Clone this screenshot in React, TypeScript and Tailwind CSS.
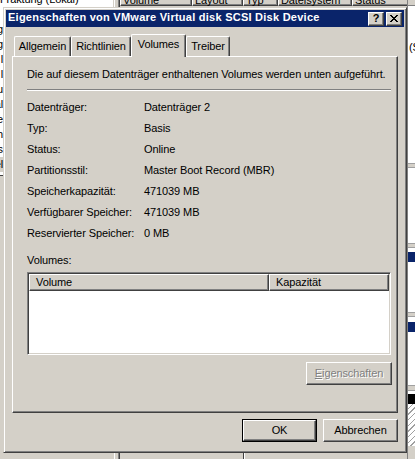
import React from "react";

const font = "font-['Liberation_Sans',Arial,sans-serif]";
const raised =
  "border border-t-white border-l-white border-r-[#404040] border-b-[#404040] shadow-[inset_-1px_-1px_0_#808080]";
const sunken =
  "border border-t-[#808080] border-l-[#808080] border-r-white border-b-white shadow-[inset_1px_1px_0_#404040,inset_-1px_-1px_0_#d4d0c8]";

const rows: [string, string][] = [
  ["Datenträger:", "Datenträger 2"],
  ["Typ:", "Basis"],
  ["Status:", "Online"],
  ["Partitionsstil:", "Master Boot Record (MBR)"],
  ["Speicherkapazität:", "471039 MB"],
  ["Verfügbarer Speicher:", "471039 MB"],
  ["Reservierter Speicher:", "0 MB"],
];

const tabs = [
  { label: "Allgemein", w: "w-[57px]" },
  { label: "Richtlinien", w: "w-[60px]" },
  { label: "Volumes", w: "w-[55px]", active: true },
  { label: "Treiber", w: "w-[44px]" },
];

const closeGlyph = [
  "XX....XX",
  ".XX..XX.",
  "..XXXX..",
  "...XX...",
  "..XXXX..",
  ".XX..XX.",
  "XX....XX",
];

function CloseIcon() {
  return (
    <svg width="8" height="7" viewBox="0 0 8 7" shapeRendering="crispEdges">
      {closeGlyph.flatMap((r, y) =>
        r.split("").map((c, x) => (c === "X" ? <rect key={`${x}-${y}`} x={x} y={y} width="1" height="1" fill="#000" /> : null))
      )}
    </svg>
  );
}

function Background() {
  const tree = ["ng", "ng", "l", "l", "u", "al", "e", "h", "s"];
  return (
    <>
      {/* tree pane behind */}
      <div className="absolute left-0 top-0 w-[113px] h-[176px] bg-white overflow-hidden border-b border-[#404040]">
        <div className="absolute left-0 top-[-7px] leading-[13px] whitespace-nowrap">Fraktung (Lokal)</div>
        <div className="absolute right-[110px] top-[22px] w-[40px] text-right leading-[15px]">
          {tree.map((t, i) => (
            <div key={i}>{t}</div>
          ))}
          <div className="bg-[#d4d0c8]">el</div>
        </div>
      </div>
      {/* splitter */}
      <div className="absolute left-[114px] top-0 w-px h-full bg-white" />
      <div className="absolute left-[118px] top-0 w-px h-full bg-[#808080]" />
      <div className="absolute left-[119px] top-0 w-px h-full bg-[#404040]" />
      {/* list header behind */}
      <div className="absolute left-[120px] top-0 h-[6px] right-0 flex overflow-hidden">
        {[
          ["Volume", "w-[72px]"],
          ["Layout", "w-[51px]"],
          ["Typ", "w-[35px]"],
          ["Dateisystem", "w-[74px]"],
          ["Status", "flex-1"],
        ].map(([t, w]) => (
          <div key={t} className={`${w} relative h-[14px] -mt-[8px] ${raised}`}>
            <span className="absolute left-[2px] top-[1px] leading-[13px]">{t}</span>
          </div>
        ))}
      </div>
      {/* graphical view at the right */}
      <div className="absolute left-[407px] top-0 w-[8px] h-full flex flex-col border-l border-[#808080]">
        <div className="h-[5px] bg-[#d4d0c8]" />
        <div className="h-[158px] bg-white border-t border-[#808080] relative">
          <span className="absolute left-[1px] top-[35px] leading-[13px]">(S</span>
        </div>
        <div className="h-[5px] bg-[#d4d0c8] border-y border-[#a0a0a0]" />
        <div className="h-[75px] bg-white" />
        <div className="h-[5px] bg-[#d4d0c8] border-y border-[#a0a0a0]" />
        <div className="h-[4px] bg-white" />
        <div className="h-[10px] bg-[#0a246a]" />
        <div className="h-[50px] bg-white" />
        <div className="h-[5px] bg-[#d4d0c8] border-y border-[#a0a0a0]" />
        <div className="h-[5px] bg-white" />
        <div className="h-[10px] bg-[#0a246a]" />
        <div className="h-[53px] bg-white" />
        <div className="h-[6px] bg-[#d4d0c8] border-y border-[#a0a0a0]" />
        <div className="h-[3px] bg-white" />
        <div className="h-[10px] bg-black" />
        <div className="h-[42px] bg-[repeating-linear-gradient(135deg,#ffffff_0px,#ffffff_3px,#a0a0a0_3px,#a0a0a0_4px)]" />
        <div className="flex-1 bg-[#d4d0c8]" />
      </div>
      {/* bits below the dialog */}
      <div className="absolute left-[243px] top-[453px] w-px h-[6px] bg-[#404040]" />
      <div className="absolute left-[244px] top-[453px] w-px h-[6px] bg-white" />
    </>
  );
}

function Button({ children, isDefault, disabled }: { children: React.ReactNode; isDefault?: boolean; disabled?: boolean }) {
  const body = (
    <div
      className={`h-full w-full flex items-center justify-center ${raised} ${
        disabled ? "text-[#808080] [text-shadow:1px_1px_0_#ffffff]" : "text-black"
      }`}
    >
      {children}
    </div>
  );
  return (
    <div className={`w-[75px] h-[23px] ${isDefault ? "border border-black" : ""}`}>{body}</div>
  );
}

export default function App() {
  return (
    <div className={`relative w-[415px] h-[459px] overflow-hidden bg-[#d4d0c8] text-[11px] tracking-[-0.1px] text-black ${font}`}>
      <Background />

      {/* dialog window */}
      <div className="absolute left-[3px] top-[7px] w-[404px] h-[446px] bg-[#d4d0c8] p-[2px] border border-t-[#d4d0c8] border-l-[#d4d0c8] border-r-[#404040] border-b-[#404040] shadow-[inset_1px_1px_0_#ffffff,inset_-1px_-1px_0_#808080] flex flex-col">
        {/* caption */}
        <div className="h-[17px] bg-[#0a246a] flex items-center pl-[2px] pr-[2px]">
          <span className="flex-1 text-white font-bold tracking-[0.25px] pb-[2px] whitespace-nowrap">
            Eigenschaften von VMware Virtual disk SCSI Disk Device
          </span>
          <div className="flex gap-[2px]">
            <div className={`w-[16px] h-[14px] bg-[#d4d0c8] flex items-center justify-center font-bold leading-none ${raised}`}>
              ?
            </div>
            <div className={`w-[16px] h-[14px] bg-[#d4d0c8] flex items-center justify-center ${raised}`}>
              <CloseIcon />
            </div>
          </div>
        </div>

        <div className="flex-1 flex flex-col px-[6px]">
          {/* tabs */}
          <div className="mt-[7px] h-[22px] flex items-end pl-[2px]">
            {tabs.map((t) =>
              t.active ? (
                <div
                  key={t.label}
                  className={`${t.w} h-[23px] -mb-px relative z-10 bg-[#d4d0c8] flex items-center justify-center pb-[3px] border-t border-l border-r border-t-white border-l-white border-r-[#404040] shadow-[inset_-1px_0_0_#808080] rounded-t-[2px]`}
                >
                  {t.label}
                </div>
              ) : (
                <div
                  key={t.label}
                  className={`${t.w} h-[20px] flex items-center justify-center pb-[1px] border-t border-l border-r border-t-white border-l-white border-r-[#404040] shadow-[inset_-1px_0_0_#808080] rounded-t-[2px]`}
                >
                  {t.label}
                </div>
              )
            )}
          </div>

          {/* panel */}
          <div className={`h-[357px] flex flex-col pl-[14px] pr-[6px] pt-[11px] ${raised}`}>
            <div className="leading-[13px] whitespace-nowrap">
              Die auf diesem Datenträger enthaltenen Volumes werden unten aufgeführt.
            </div>
            <div className="mt-[8px] h-[2px] border-t border-[#808080] border-b border-b-white" />

            <div className="mt-[6px] flex flex-col">
              {rows.map(([k, v]) => (
                <div key={k} className="h-[21px] flex items-center">
                  <span className="w-[117px] shrink-0">{k}</span>
                  <span>{v}</span>
                </div>
              ))}
            </div>

            <div className="mt-[10px] leading-[13px]">Volumes:</div>
            <div className={`mt-[5px] h-[83px] bg-white flex flex-col p-[1px] ${sunken}`}>
              <div className="flex h-[17px] bg-[#d4d0c8]">
                <div className={`w-[240px] flex items-center pl-[6px] ${raised}`}>Volume</div>
                <div className={`flex-1 flex items-center pl-[6px] ${raised}`}>Kapazität</div>
              </div>
            </div>

            <div className="mt-[7px] flex justify-end -mr-px">
              <div className="w-[86px]">
                <div
                  className={`h-[23px] w-full flex items-center justify-center text-[#808080] [text-shadow:1px_1px_0_#ffffff] ${raised}`}
                >
                  <span>
                    <u>E</u>igenschaften
                  </span>
                </div>
              </div>
            </div>
          </div>

          {/* footer */}
          <div className="pt-[6px] flex justify-end gap-[6px] pr-[0px]">
            <Button isDefault>OK</Button>
            <Button>Abbrechen</Button>
          </div>
        </div>
      </div>
    </div>
  );
}
